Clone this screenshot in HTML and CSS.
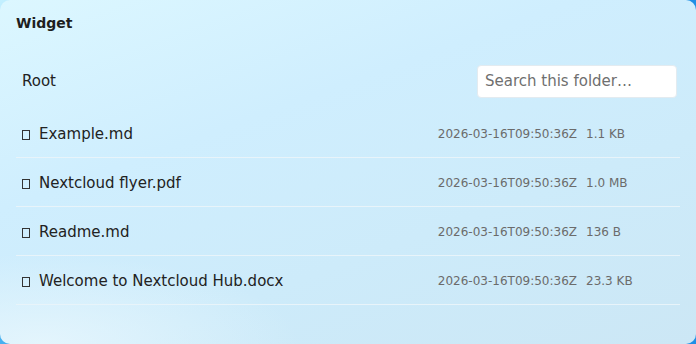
FILE: index.html
```html
<!DOCTYPE html>
<html lang="en">
<head>
<meta charset="utf-8">
<title>Widget</title>
<link rel="stylesheet" href="styles.css">
</head>
<body>
<div class="card">
  <div class="title">Widget</div>
  <div class="header">
    <span class="crumb">Root</span>
    <input class="search" type="text" placeholder="Search this folder…">
  </div>
  <ul class="list">
    <li class="row"><span class="name"><span class="icon"></span>Example.md</span><span class="date">2026-03-16T09:50:36Z</span><span class="size">1.1 KB</span></li>
    <li class="row"><span class="name"><span class="icon"></span>Nextcloud flyer.pdf</span><span class="date">2026-03-16T09:50:36Z</span><span class="size">1.0 MB</span></li>
    <li class="row"><span class="name"><span class="icon"></span>Readme.md</span><span class="date">2026-03-16T09:50:36Z</span><span class="size">136 B</span></li>
    <li class="row"><span class="name"><span class="icon"></span>Welcome to Nextcloud Hub.docx</span><span class="date">2026-03-16T09:50:36Z</span><span class="size">23.3 KB</span></li>
  </ul>
</div>
</body>
</html>
```
FILE: styles.css
```css
html, body {
  margin: 0;
  padding: 0;
  height: 100%;
}
body {
  background: linear-gradient(135deg, #c4f0ff 0%, #59c0f5 20%, #1f8fe6 60%, #1f8fe6 100%);
  font-family: "DejaVu Sans", sans-serif;
  color: #222;
  overflow: hidden;
}
.card {
  box-sizing: border-box;
  width: 696px;
  height: 344px;
  border-radius: 10px;
  padding: 15px 16px 0 16px;
  background:
    radial-gradient(ellipse 260px 90px at 40px 344px, rgba(230, 246, 253, 0.9), rgba(230, 246, 253, 0) 100%),
    linear-gradient(160deg, #dcf7ff 0%, #cfeefe 35%, #cdebfa 65%, #cce7f5 100%);
}
.title {
  font-size: 14px;
  font-weight: bold;
  line-height: 16px;
  color: #1e1e1e;
}
.header {
  display: flex;
  align-items: center;
  justify-content: space-between;
  height: 32px;
  margin-top: 34px;
  margin-bottom: 12px;
  padding: 0 3px 0 6px;
}
.crumb {
  font-size: 15px;
  color: #222;
}
.search {
  box-sizing: border-box;
  width: 200px;
  height: 33px;
  border: 1px solid #e3ebf0;
  border-radius: 4px;
  background: #fff;
  padding: 0 7px;
  font-family: "DejaVu Sans", sans-serif;
  font-size: 15px;
  color: #222;
  outline: none;
}
.search::placeholder {
  color: #6f6f6f;
}
.list {
  list-style: none;
  margin: 0;
  padding: 0;
}
.row {
  box-sizing: border-box;
  display: flex;
  align-items: center;
  height: 49px;
  border-bottom: 1px solid #e8f4fa;
  padding: 1px 6px 0 6px;
}
.name {
  flex: 1;
  display: flex;
  align-items: center;
  font-size: 15px;
  color: #222;
}
.icon {
  display: inline-block;
  box-sizing: border-box;
  width: 8px;
  height: 10px;
  border: 1px solid #333;
  margin-right: 9px;
  margin-top: 2px;
}
.date, .size {
  font-size: 12px;
  color: #6b6b6b;
}
.date {
  margin-right: 9px;
}
.size {
  width: 88px;
}
```
